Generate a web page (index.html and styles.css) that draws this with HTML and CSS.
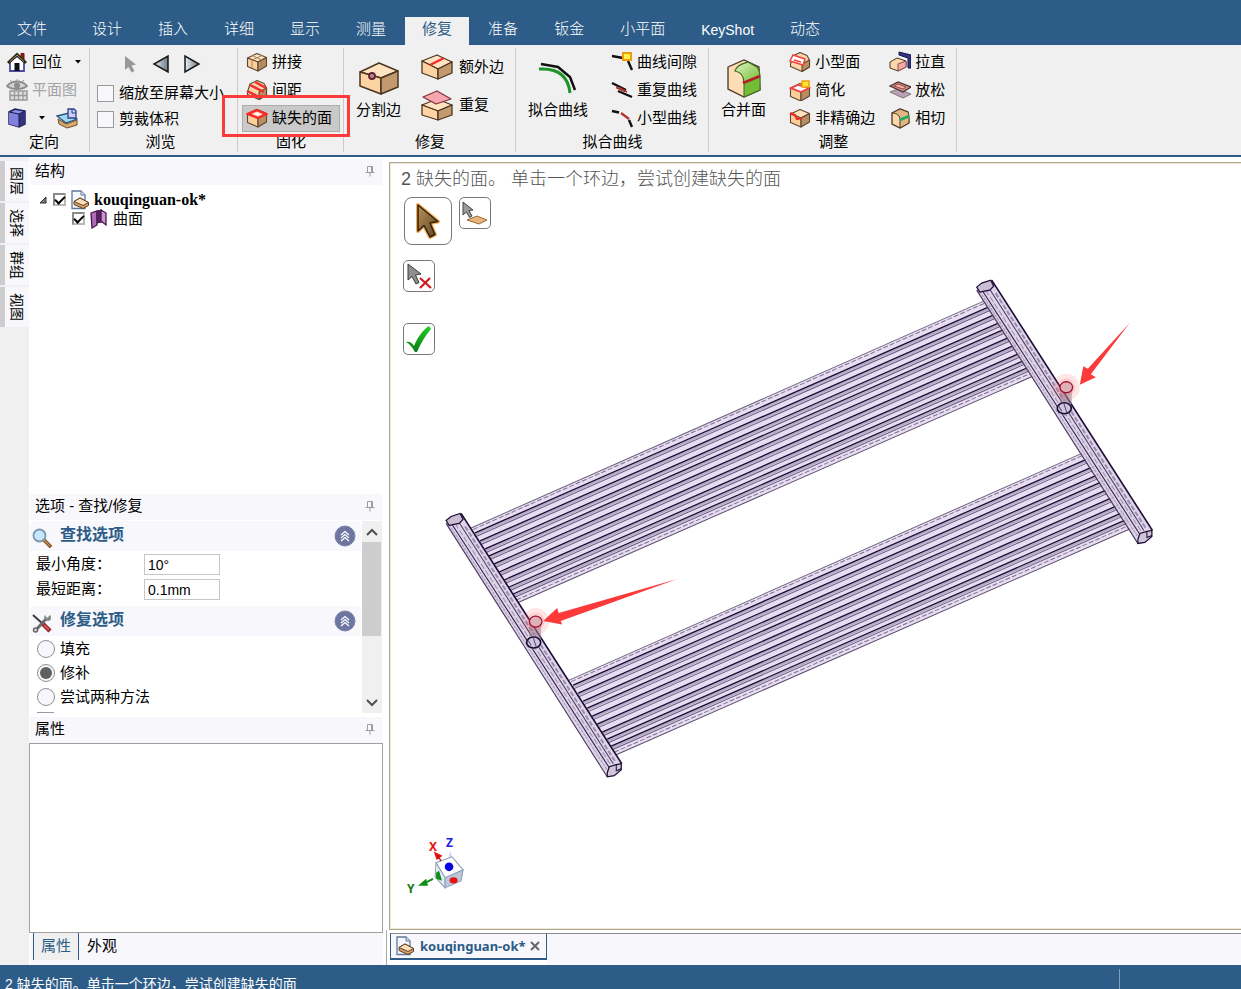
FILE: index.html
```html
<!DOCTYPE html>
<html lang="zh-CN">
<head>
<meta charset="utf-8">
<title>kouqinguan-ok*</title>
<link rel="stylesheet" href="styles.css">
</head>
<body>
<svg class="defs" aria-hidden="true">
  <defs>
    <linearGradient id="gArrow" x1="0" x2="1"><stop offset="0" stop-color="#e8eef2"/><stop offset="1" stop-color="#6e7a86"/></linearGradient>
    <linearGradient id="gGold" x1="0" y1="0" x2="1" y2="1"><stop offset="0" stop-color="#b8935a"/><stop offset="1" stop-color="#5f4520"/></linearGradient>
    <linearGradient id="gCheck" x1="0" y1="0" x2="0" y2="1"><stop offset="0" stop-color="#22d022"/><stop offset="1" stop-color="#0b7a18"/></linearGradient>
    <linearGradient id="gGreen" x1="0" y1="0" x2="1" y2="1"><stop offset="0" stop-color="#e2f3c8"/><stop offset="1" stop-color="#6dbb2c"/></linearGradient>
    <symbol id="box" viewBox="0 0 22 22">
      <g stroke="#5e4830" stroke-width="1.1" stroke-linejoin="round">
        <path d="M1.5 7 11 2.500 20.500 6.500 12 11Z" fill="#ffe3c0"/>
        <path d="M1.500 7 12 11V20L1.500 15.500Z" fill="#fbcf9c"/>
        <path d="M12 11 20.500 6.500V15L12 20Z" fill="#b98d60"/>
      </g>
    </symbol>
    <symbol id="roundbox" viewBox="0 0 22 22">
      <g stroke="#5e4830" stroke-width="1.100" stroke-linejoin="round">
        <path d="M1.500 13 4 5 11 1.500 18 4.500 20.500 9V16L13 20.500 1.500 15.500Z" fill="#fbd7ac"/>
        <path d="M13 13 20.500 9V16L13 20.500Z" fill="#b98d60"/>
      </g>
    </symbol>
    <symbol id="doc" viewBox="0 0 20 20">
      <path d="M2 1H11L15 5V18.500H2Z" fill="#f4f8fc" stroke="#61789c" stroke-width="1.300"/>
      <path d="M11 1V5H15" fill="#d5e0ee" stroke="#61789c"/>
      <path d="M4 11.500 10 8 18.500 12.500V15.500L13 18.500 4 14.500Z" fill="#d8a06a" stroke="#5e4020" stroke-linejoin="round"/>
      <path d="M4 11.500 10 8 18.500 12.500 13 15.500Z" fill="#fde0bb" stroke="#5e4020" stroke-linejoin="round"/>
    </symbol>
    <symbol id="pin" viewBox="0 0 10 12">
      <path d="M2.500 1.500H7.500V7.500M2.500 1.500V7.500M.5 7.500H9.500M5 7.500V11.500M6.500 1.500V7.500" fill="none" stroke="#9b9ba0"/>
    </symbol>
    <symbol id="collapse" viewBox="0 0 22 22">
      <circle cx="11" cy="11" r="10" fill="#6d76a0" stroke="#7e86a8"/>
      <path d="M7 10 11 6.500 15 10M7 13 11 9.500 15 13M7 16 11 12.500 15 16" fill="none" stroke="#fff" stroke-width="1.300"/>
    </symbol>
    <symbol id="caret" viewBox="0 0 8 4"><path d="M1 0H7L4 3.500Z"/></symbol>

    <g id="groove">
      <path d="M475 534.300 991 307.300" stroke="#b5abc3" stroke-width="2"/>
      <path d="M475 532.500 991 305.500" stroke="#1d0936" stroke-width="1.300"/>
      <path d="M476 536 992 309" stroke="#6a5784" stroke-width="1"/>
    </g>
    <g id="tubes" fill="none">
      <path d="M471 527.500 983 301 1032 376 518 602Z" fill="#e7def2"/>
      <path d="M471 527.500 983 301" stroke="#6f627f"/>
      <path d="M473 529 984 303" stroke="#7f718f" stroke-dasharray="5 2"/>
      <use href="#groove"/>
      <use href="#groove" x="5" y="8"/>
      <use href="#groove" x="10" y="16"/>
      <use href="#groove" x="14" y="23"/>
      <use href="#groove" x="19" y="31"/>
      <use href="#groove" x="24" y="39"/>
      <use href="#groove" x="29" y="47"/>
      <use href="#groove" x="34" y="54"/>
      <use href="#groove" x="38" y="61"/>
      <path d="M516 599.500 1030 373" stroke="#7f718f" stroke-dasharray="5 2"/>
      <path d="M518 602 1032 376" stroke="#5d4c70"/>
    </g>
    <g id="manifold" fill="none">
      <path d="M446 523 450 517 461 513 621.500 763 620 769 608 776Z" fill="#dacfe6" fill-opacity=".9"/>
      <path d="M446 523 607 776" stroke="#4c3a60" stroke-width="1.200"/>
      <path d="M449 524 608 771" stroke="#a396b4" stroke-dasharray="3 1"/>
      <path d="M452 524 609 767" stroke="#2a1542"/>
      <path d="M455 523 611 765" stroke="#9a8cac" stroke-dasharray="6 2"/>
      <path d="M459 522 613 763" stroke="#4a3560"/>
      <path d="M465 526 615 761" stroke="#9a8cac" stroke-width="2" stroke-dasharray="5 2"/>
      <path d="M461 513 621.500 763" stroke="#1d0936" stroke-width="1.600"/>
      <path d="M446 520 451 516 460 513 463 519 459 523 449 525Z" fill="#c9bed2" stroke="#1d0936" stroke-width="1.200"/>
      <path d="M607 772 609 766 616 764 621 763 621 769 614 775 607 776Z" fill="#cfc5d8" stroke="#1d0936" stroke-width="1.200"/>
      <path d="M616 764V770L621 768" stroke="#1d0936"/>
    </g>
    <g id="port">
      <circle cx="535.500" cy="621" r="13.500" fill="#fc3a3a" fill-opacity=".13"/>
      <path d="M529 621H541V638L535 636 529 639Z" fill="#9b7f93" fill-opacity=".55"/>
      <circle cx="535.500" cy="621" r="9" fill="#fc6a6a" fill-opacity=".18"/>
      <ellipse cx="535.500" cy="621" rx="6.300" ry="5.500" fill="#dfb1ba" stroke="#a3102e" stroke-width="1.300"/>
      <path d="M527 639 533 634 540 637 541 645 534 650 528 646Z" fill="#b5a9c0" fill-opacity=".7"/>
      <ellipse cx="533.500" cy="642" rx="7" ry="5.500" fill="#cfc5de" stroke="#170a30" stroke-width="1.600"/>
      <path d="M533 637 536 646M528 640 531 645" stroke="#5a4872"/>
    </g>
  </defs>
</svg>

<div class="app">
  <nav class="tabs" aria-label="功能区">
    <button class="tab tab-file">文件</button>
    <button class="tab">设计</button>
    <button class="tab">插入</button>
    <button class="tab">详细</button>
    <button class="tab">显示</button>
    <button class="tab">测量</button>
    <button class="tab active">修复</button>
    <button class="tab">准备</button>
    <button class="tab">钣金</button>
    <button class="tab">小平面</button>
    <button class="tab latin">KeyShot</button>
    <button class="tab">动态</button>
  </nav>

  <div class="ribbon">
    <section class="group orient">
      <div class="group-body stack">
        <div class="tool-row">
          <button class="tool"><svg class="icon" viewBox="0 0 22 22"><path d="M4 11V20H18V11L11 5Z" fill="#fff" stroke="#4a4aa0" stroke-width="1.800"/><path d="M15 2.500H18V10L15 7Z" fill="#9c1c1c" stroke="#6c1010"/><path d="M2 12 11 3.500 20 12" fill="none" stroke="#2e2a10" stroke-width="3"/><path d="M4 10.500 11 4 18 10.500" fill="none" stroke="#98904a" stroke-width="1"/><path d="M8.500 12H13.500V20H8.500Z" fill="#101018"/></svg>回位</button>
          <button class="drop drop-gap" aria-label="回位选项"><svg class="caret"><use href="#caret"/></svg></button>
        </div>
        <button class="tool" disabled><svg class="icon" viewBox="0 0 22 22"><path d="M1 7C6 1 16 1 21 7 16 11 6 11 1 7Z" fill="#d4d4d4" stroke="#8d8d8d" stroke-width="1.800"/><circle cx="11" cy="6.500" r="3" fill="#8d8d8d"/><path d="M4 1 6 3M11 0V2M18 1 16 3" stroke="#999"/><path d="M4 12H21V21H4Z" fill="#dedede" stroke="#999" stroke-width="1.500"/><path d="M4 16.500H21M8.500 12V21M12.500 12V21M17 12V21" stroke="#999" stroke-width="1.300"/></svg>平面图</button>
        <div class="tool-row">
          <button class="tool" aria-label="视图方向"><svg class="icon" viewBox="0 0 22 22"><path d="M3 5 9 2 19 4V17L13 20 3 17Z" fill="#8c8ce8" stroke="#1c1c50" stroke-width="1.500"/><path d="M3 5 13 7V20L3 17Z" fill="#8080dc"/><path d="M13 7 19 4V17L13 20Z" fill="#33337e"/><path d="M3 5 13 7 19 4M13 7V20" fill="none" stroke="#1c1c50"/></svg></button>
          <button class="drop" aria-label="视图方向选项"><svg class="caret"><use href="#caret"/></svg></button>
          <button class="tool" aria-label="草图平面"><svg class="icon" viewBox="0 0 22 22"><path d="M2 12 10 17 21 13V18L11 21 3 17Z" fill="#d8a86c" stroke="#6a5030"/><path d="M1 9 13 6 21 12 10 16Z" fill="#a0d8f0" stroke="#2c5478" stroke-width="1.300"/><path d="M12 11V2H18L20 4V11Z" fill="#c4d0f4" stroke="#30408c" stroke-width="1.300"/><path d="M16 2V6H20" fill="none" stroke="#30408c"/></svg></button>
        </div>
      </div>
      <h2 class="group-title">定向</h2>
    </section>

    <section class="group browse">
      <div class="group-body stack">
        <div class="nav-row">
          <button class="nav" aria-label="选择"><svg class="nav-icon" viewBox="0 0 20 20"><path d="M5 2V16L8.500 13 11.500 18.500 14.500 17 11.500 11.500 16 10.500Z" fill="#999"/></svg></button>
          <button class="nav" aria-label="上一视图"><svg class="nav-icon" viewBox="0 0 20 20"><path d="M17 2V18L3 10Z" fill="url(#gArrow)" stroke="#151515" stroke-width="1.500"/></svg></button>
          <button class="nav" aria-label="下一视图"><svg class="nav-icon" viewBox="0 0 20 20"><path d="M3 2V18L17 10Z" fill="url(#gArrow)" stroke="#151515" stroke-width="1.500"/></svg></button>
        </div>
        <label class="check-row"><input class="box-check" type="checkbox">缩放至屏幕大小</label>
        <label class="check-row"><input class="box-check" type="checkbox">剪裁体积</label>
      </div>
      <h2 class="group-title">浏览</h2>
    </section>

    <section class="group solidify">
      <div class="group-body stack">
        <button class="tool"><svg class="icon" viewBox="0 0 22 22"><use href="#box"/><path d="M6 4.500 16 9M16 4.500 6 9M6 9V17M16 9V17" fill="none" stroke="#a88460"/></svg>拼接</button>
        <button class="tool"><svg class="icon" viewBox="0 0 22 22"><use href="#roundbox"/><path d="M4 6 18 13M9 3 20 9M1 12 13 18" stroke="#f03030" stroke-width="2.500"/></svg>间距</button>
        <button class="tool pressed"><svg class="icon" viewBox="0 0 22 22"><use href="#box"/><path d="M2 7 11 3 20 7 12 11Z" fill="#ffd8b8" stroke="#f52a2a" stroke-width="2.500"/><path d="M8 7 11 5.500 14.500 7 12 8.500Z" fill="#fff"/></svg>缺失的面<span class="callout"></span></button>
      </div>
      <h2 class="group-title">固化</h2>
    </section>

    <section class="group fix">
      <div class="group-body">
        <button class="big"><svg class="big-icon" viewBox="0 0 40 40"><g stroke="#4a3520" stroke-width="1.500" stroke-linejoin="round"><path d="M1 14 20 5 39 13 22 20Z" fill="#ffe3c0"/><path d="M1 14 22 20V36L1 28Z" fill="#fdd3a4"/><path d="M22 20 39 13V29L22 36Z" fill="#c29a6e"/></g><circle cx="13" cy="18" r="3" fill="#b88" stroke="#5e2230" stroke-width="1.800"/></svg>分割边</button>
        <div class="stack tall">
          <button class="tool wide"><svg class="icon-lg" viewBox="0 0 32 32"><g stroke="#4a3520" stroke-width="1.300" stroke-linejoin="round"><path d="M1 10 16 4 31 11 17 18Z" fill="#ffe3c0"/><path d="M1 10 17 18V28L1 22Z" fill="#fdd3a4"/><path d="M17 18 31 11V22L17 28Z" fill="#c29a6e"/></g><path d="M9 14 23 7" stroke="#f52a2a" stroke-width="2.500"/></svg>额外边</button>
          <button class="tool wide"><svg class="icon-lg" viewBox="0 0 32 32"><g stroke="#4a3520" stroke-width="1.300" stroke-linejoin="round"><path d="M1 16 16 10 31 16 17 22Z" fill="#ffe3c0"/><path d="M1 16 17 22V31L1 26Z" fill="#fdd3a4"/><path d="M17 22 31 16V26L17 31Z" fill="#c29a6e"/><path d="M2 8 16 2 30 10 15 15Z" fill="#f8a6ae" stroke="#7c3440"/></g></svg>重复</button>
        </div>
      </div>
      <h2 class="group-title">修复</h2>
    </section>

    <section class="group fit">
      <div class="group-body">
        <button class="big"><svg class="big-icon" viewBox="0 0 40 40"><path d="M3 6 20 9 32 19 37 32" fill="none" stroke="#111" stroke-width="2.500"/><path d="M1 11C17 10 30 15 32 35" fill="none" stroke="#1c9428" stroke-width="3"/></svg>拟合曲线</button>
        <div class="stack">
          <button class="tool"><svg class="icon" viewBox="0 0 22 22"><path d="M1 5 12 7M17 10 21 19" stroke="#111" stroke-width="2.400"/><path d="M12 2H20V9H12Z" fill="#fff04a" stroke="#f09a10" stroke-width="2"/></svg>曲线间隙</button>
          <button class="tool"><svg class="icon" viewBox="0 0 22 22"><path d="M1 4 15 11M7 12 21 18" stroke="#111" stroke-width="2.400"/><path d="M5 8.500 14 12.500M8 8.500 16 13" stroke="#b03030" stroke-width="1.500"/></svg>重复曲线</button>
          <button class="tool"><svg class="icon" viewBox="0 0 22 22"><path d="M1 4 8 5.500M18 13 21 20" stroke="#111" stroke-width="2.400"/><path d="M10 6 18 12" stroke="#b03030" stroke-width="2.200"/></svg>小型曲线</button>
        </div>
      </div>
      <h2 class="group-title">拟合曲线</h2>
    </section>

    <section class="group adjust">
      <div class="group-body">
        <button class="big"><svg class="big-icon" viewBox="0 0 40 40"><path d="M4 9 20 2 35 9 36 32 20 39 4 31Z" fill="#fddcb6" stroke="#4a3520" stroke-width="1.300"/><path d="M11 13C13 6 22 5 24 4L33 9C36 13 36 17 36 19L20 25C20 18 17 14 11 13Z" fill="url(#gGreen)" stroke="#3d6a22" stroke-width="1.200"/><path d="M20 25 36 19V32L20 39Z" fill="#72bd35" stroke="#3d6a22"/><path d="M19 25 36 18" stroke="#b81c2c" stroke-width="2.500"/></svg>合并面</button>
        <div class="stack">
          <button class="tool"><svg class="icon" viewBox="0 0 22 22"><use href="#roundbox"/><path d="M1 10 4 4 16 8 14 14Z" fill="#fff" stroke="#f04040" stroke-width="1.500"/><path d="M5 9 12 11" stroke="#f04040" stroke-width="1.500"/></svg>小型面</button>
          <button class="tool"><svg class="icon" viewBox="0 0 22 22"><use href="#box" y="2"/><path d="M2 9 9 6 20 9 12 13Z" fill="#fff" stroke="#f04040" stroke-width="1.800"/><path d="M13 2H20V8H13Z" fill="#ffe72a" stroke="#f0a018" stroke-width="1.500"/></svg>简化</button>
          <button class="tool"><svg class="icon" viewBox="0 0 22 22"><use href="#box"/><path d="M1 6 6 8 8 12 13 11" fill="none" stroke="#f02828" stroke-width="2.200"/></svg>非精确边</button>
        </div>
        <div class="stack second">
          <button class="tool"><svg class="icon" viewBox="0 0 22 22"><path d="M10 1 22 4V17H19V7L10 4Z" fill="#34348a" stroke="#15154c"/><path d="M1 11 8 7 17 10V16L9 20 1 17Z" fill="#fbd7ac" stroke="#4a3520"/><path d="M9 13 17 10V16L9 20Z" fill="#f7a9a9" stroke="#854"/></svg>拉直</button>
          <button class="tool"><svg class="icon" viewBox="0 0 22 22"><path d="M1 13 9 10 22 15 14 19Z" fill="#b9a2b4" stroke="#84707e"/><path d="M1 7 9 3 22 8 14 13Z" fill="#c78d86" stroke="#4b3438" stroke-width="1.300"/><path d="M5 7 9 5 17 8 14 10Z" fill="#e6b8a4" stroke="#a84848"/></svg>放松</button>
          <button class="tool"><svg class="icon" viewBox="0 0 22 22"><path d="M3 6 11 2 19 5 20 16 11 21 3 17Z" fill="#fbd7ac" stroke="#4a3520" stroke-width="1.300"/><path d="M3 6C8 6 11 9 11 12V21L20 16V10C20 7 19 5 19 5L11 2Z" fill="#e1b682" stroke="#4a3520"/><path d="M11 13 20 9" stroke="#18b060" stroke-width="2.500"/></svg>相切</button>
        </div>
      </div>
      <h2 class="group-title">调整</h2>
    </section>
  </div>

  <main class="work">
    <aside class="side-tabs">
      <button class="side-tab">图层</button>
      <button class="side-tab">选择</button>
      <button class="side-tab">群组</button>
      <button class="side-tab">视图</button>
    </aside>

    <div class="panels">
      <header class="panel-head"><h2>结构</h2><svg class="pin"><use href="#pin"/></svg></header>
      <div class="tree">
        <div class="node"><svg class="twisty" viewBox="0 0 8 8"><path d="M7 1V7H1Z" fill="#777" stroke="#333"/></svg><input class="tree-check" type="checkbox" id="n1" checked><svg class="tree-icon"><use href="#doc"/></svg><label class="root-name" for="n1">kouqinguan-ok*</label></div>
        <div class="node child"><input class="tree-check" type="checkbox" id="n2" checked><svg class="tree-icon" viewBox="0 0 20 20"><path d="M2 4 8 2V16L3 19Z" fill="#b26ab4" stroke="#43184c" stroke-width="1.300"/><path d="M8 2 13 1V13L8 14Z" fill="#5c1f66" stroke="#43184c"/><path d="M12 1 17 4V16L12 12Z" fill="#cf94d2" stroke="#43184c" stroke-width="1.300"/></svg><label for="n2">曲面</label></div>
      </div>

      <header class="panel-head"><h2>选项 - 查找/修复</h2><svg class="pin"><use href="#pin"/></svg></header>
      <div class="options">
        <div class="option-list">
          <div class="section-head"><svg class="section-icon" viewBox="0 0 20 20"><path d="M12 12 19 19" stroke="#7b4c22" stroke-width="3.500"/><path d="M12 12 18 18" stroke="#c58c4c" stroke-width="1.500"/><circle cx="7.500" cy="7.500" r="6" fill="#c5e8fa" stroke="#7d98ae" stroke-width="1.800"/></svg><h3>查找选项</h3><button class="fold" aria-label="折叠查找选项"><svg class="fold-icon"><use href="#collapse"/></svg></button></div>
          <div class="fields">
            <label for="angle">最小角度：</label><input class="field" id="angle" value="10°">
            <label for="dist">最短距离：</label><input class="field" id="dist" value="0.1mm">
          </div>
          <div class="section-head"><svg class="section-icon" viewBox="0 0 20 20"><path d="M1 2 11 11" stroke="#3d3d3d" stroke-width="2"/><path d="M11 11 18 18" stroke="#8e2020" stroke-width="4.500"/><path d="M12 12 17 17" stroke="#d85858" stroke-width="2"/><path d="M3 18 14 6" stroke="#6a6a6a" stroke-width="3"/><path d="M18 2 15 5 13 2C11 5 13 8 16 8 19 8 20 5 18 2Z" fill="#888"/><circle cx="3.500" cy="17" r="2" fill="#ddd" stroke="#666" stroke-width="1.500"/></svg><h3>修复选项</h3><button class="fold" aria-label="折叠修复选项"><svg class="fold-icon"><use href="#collapse"/></svg></button></div>
          <div class="radios">
            <label class="radio-row"><input class="radio" type="radio" name="m">填充</label>
            <label class="radio-row"><input class="radio" type="radio" name="m" checked>修补</label>
            <label class="radio-row"><input class="radio" type="radio" name="m">尝试两种方法</label>
            <input class="box-check" type="checkbox" aria-label="更多选项">
          </div>
        </div>
        <div class="scrollbar">
          <button class="scroll-btn" aria-label="向上"><svg class="chev" viewBox="0 0 12 8"><path d="M1 7 6 2 11 7" fill="none" stroke="#505050" stroke-width="2"/></svg></button>
          <div class="thumb"></div>
          <button class="scroll-btn scroll-down" aria-label="向下"><svg class="chev" viewBox="0 0 12 8"><path d="M1 1 6 6 11 1" fill="none" stroke="#505050" stroke-width="2"/></svg></button>
        </div>
      </div>

      <header class="panel-head"><h2>属性</h2><svg class="pin"><use href="#pin"/></svg></header>
      <div class="props"></div>
      <div class="bottom-tabs"><button class="bottom-tab current">属性</button><button class="bottom-tab">外观</button></div>
    </div>

    <div class="stage">
      <div class="viewport">
        <svg class="model" viewBox="391 164 850 765" preserveAspectRatio="xMinYMin meet">
          <use href="#tubes"/>
          <use href="#tubes" x="98" y="152"/>
          <use href="#manifold"/>
          <use href="#manifold" x="530" y="-233"/>
          <use href="#port"/>
          <use href="#port" x="530" y="-234"/>
          <path d="M543 620.500 557 607.500 558.500 612.500 677 578.500 560.500 620.500 562 624Z" fill="#fc3a3a"/>
          <path d="M1079 384.500 1082.500 366 1087 368.500 1129 322.500 1090 374 1095 377Z" fill="#fc3a3a"/>
          <g class="axis">
            <path d="M450 850 454 862H447Z" fill="#d5d5fa"/>
            <path d="M436 862 452 856 463 869 445 877Z" fill="#fff" stroke="#8c9cb4"/>
            <path d="M436 862 445 877V887L435 876Z" fill="#e9eef6" stroke="#8c9cb4"/>
            <path d="M445 877 463 869 461 880 445 887Z" fill="#bcc8da" stroke="#8c9cb4"/>
            <circle cx="449" cy="866" r="4.300" fill="#0505e6"/>
            <ellipse cx="453.500" cy="879.500" rx="4" ry="3.200" fill="#e81212"/>
            <path d="M436 872 439 870 442 880 436 878Z" fill="#109018"/>
            <path d="M418 885 426 878 428 885Z" fill="#109018"/><path d="M424 882.500 433 878" stroke="#109018" stroke-width="2"/>
            <path d="M435 852 441 855 437 858ZM437 854 441 860" fill="#e01010" stroke="#e01010" stroke-width="1.500"/>
            <text x="429" y="850" fill="#e81212">X</text>
            <text x="446" y="846" fill="#2222e6">Z</text>
            <text x="407" y="892" fill="#187818">Y</text>
          </g>
        </svg>
        <div class="hud">
          <p class="hint">2 缺失的面。 单击一个环边，尝试创建缺失的面</p>
          <div class="hud-row">
            <button class="hud-btn hud-large" aria-label="选择"><svg class="hud-ptr" viewBox="0 0 24 36"><g stroke-linejoin="round"><path d="M2 2V28L8 22.500 14 34 19 31.500 14 20 22 18.500Z" fill="none" stroke="#f8ae58" stroke-width="4"/><path d="M2 2V28L8 22.500 14 34 19 31.500 14 20 22 18.500Z" fill="url(#gGold)" stroke="#2c200e" stroke-width="1.500"/></g></svg></button>
            <button class="hud-btn" aria-label="选择面"><svg class="hud-icon" viewBox="0 0 30 30"><path d="M3 4V17L6.500 14 9.500 19.500 12 18 9 12.500 13 12Z" fill="#9a9a9a" stroke="#444"/><path d="M7 22 17 18 27 22 19 26Z" fill="#e6b47c" stroke="#9a6a38"/></svg></button>
          </div>
          <button class="hud-btn" aria-label="排除"><svg class="hud-icon" viewBox="0 0 30 30"><path d="M4 3V19L8 15.500 12 23 15 21.500 11.500 14 17 13Z" fill="#8f8f8f" stroke="#3c3c3c"/><path d="M16 17 27 27M26 17 16 27" stroke="#cf1820" stroke-width="2.200"/></svg></button>
          <button class="hud-btn" aria-label="完成"><svg class="hud-icon" viewBox="0 0 30 30"><path d="M2 18C6 17 8 19 10 22 14 12 20 5 25 2L27 5C21 12 17 19 13 28H11C8 23 6 20 2 18Z" fill="url(#gCheck)"/></svg></button>
        </div>
      </div>
      <div class="doc-tabs">
        <div class="doc-tab"><svg class="tree-icon"><use href="#doc"/></svg><span>kouqinguan-ok*</span><button class="close" aria-label="关闭"><svg class="close-icon" viewBox="0 0 10 10"><path d="M1 1 9 9M9 1 1 9" stroke="#666" stroke-width="2"/></svg></button></div>
        <div class="doc-rest"></div>
      </div>
    </div>
  </main>

  <footer class="status"><span>2 缺失的面。单击一个环边，尝试创建缺失的面</span><i class="status-sep"></i></footer>
</div>
</body>
</html>
```
FILE: styles.css
```css
* { box-sizing: border-box; }
body {
  margin: 0;
  overflow: hidden;
  font: 15px/20px "Liberation Sans", "Noto Sans CJK SC", sans-serif;
  color: #000;
}
button, input { font: inherit; color: inherit; margin: 0; }
button { padding: 0; border: 0; background: none; white-space: nowrap; }
h2, h3, p { margin: 0; font: inherit; }
svg { display: block; flex: none; }
.defs { position: absolute; width: 0; height: 0; }

.app { display: flex; flex-direction: column; height: 100vh; background: #fff; }

/* top tabs */
.tabs { display: flex; align-items: flex-end; gap: 2px; height: 45px; flex: none; background: #2c5c87; }
.tab { height: 28px; padding: 0 17px 4px; color: #fff; font-weight: 300; }
.tab-file { margin-right: 9px; }
.tab.active { background: #f0f0f0; color: #2c5c87; font-weight: 400; }
.tab.latin { font-size: 14px; padding-bottom: 2px; }

/* ribbon */
.ribbon { display: flex; flex: none; padding: 3px 0; background: #f0f0f0; border-bottom: 2px solid #2c5c87; }
.group { display: flex; flex-direction: column; border-right: 1px solid #cbcbcb; padding-right: 7px; }
.group-body { display: flex; height: 84px; }
.group-title { text-align: center; height: 20px; line-height: 20px; }
.stack { display: flex; flex-direction: column; align-items: flex-start; justify-content: space-around; }
.tall { justify-content: flex-start; }
.tool-row { display: flex; }
.tool { display: flex; align-items: center; gap: 4px; height: 27px; padding: 0 3px; border: 1px solid transparent; }
.tool:disabled { color: #a3a3a3; }
.icon { width: 22px; height: 22px; }
.icon-lg { width: 32px; height: 32px; }
.tool.wide { gap: 6px; height: 38px; }
.drop { display: grid; place-items: center; width: 16px; }
.drop-gap { margin-left: 4px; }
.caret { width: 8px; height: 4px; }
.orient { padding-left: 2px; padding-right: 3px; }
.orient .tool-row:last-child { gap: 2px; }
.browse { padding-left: 7px; padding-right: 13px; }
.solidify { padding-left: 4px; padding-right: 3px; }
.solidify .stack { align-items: stretch; }
.fix, .fit, .adjust { padding-left: 8px; }
.fix .group-body { gap: 12px; }
.fit .group-body, .adjust .group-body { gap: 15px; }
.adjust .second { margin-left: -9px; }
.nav-row { display: flex; align-self: center; }
.nav { display: grid; place-items: center; width: 31px; height: 32px; }
.nav-icon { width: 20px; height: 20px; }
.check-row { display: flex; align-items: center; gap: 5px; height: 25px; white-space: nowrap; }
.box-check { appearance: none; width: 17px; height: 17px; background: #f7f7fc; border: 1px solid #9a9a9e; }
.tool.pressed { position: relative; background: #c9c9c9; border-color: #adadad; padding-right: 7px; }
.callout { position: absolute; inset: -11px -11px -6px -21px; border: 3px solid #fc3a3a; }
.big { display: flex; flex-direction: column; align-items: center; padding: 10px 4px 0; gap: 2px; }
.big-icon { width: 40px; height: 40px; }

/* work area */
.work { display: flex; flex: 1; min-height: 0; }
.side-tabs { display: flex; flex-direction: column; gap: 2px; width: 29px; flex: none; padding-top: 4px; background: #f0f0f0; }
.side-tab { width: 29px; height: 40px; border-left: 5px solid #cdcdcd; background: #f7f7fc; writing-mode: vertical-rl; text-orientation: sideways; font-size: 14px; line-height: 20px; }

.panels { display: flex; flex-direction: column; width: 353px; flex: none; padding-top: 2px; margin-left: 1px; }
.panel-head { display: flex; align-items: center; justify-content: space-between; height: 26px; flex: none; padding: 0 7px 3px 5px; background: #f7f7fc; margin-right: 1px; }
.pin { width: 10px; height: 12px; }
.tree { flex: 1; padding-top: 5px; }
.node { display: flex; align-items: center; height: 19px; padding-left: 9px; }
.node.child { padding-left: 42px; }
.twisty { width: 8px; height: 8px; margin-right: 6px; }
.tree-check { width: 13px; height: 13px; margin-right: 4px; appearance: none; background: #fff; border: 2px solid #8a8a8a; border-right-color: #b9b9b9; border-bottom-color: #b9b9b9; display: grid; place-items: center; }
.tree-check:checked::after { content: ""; width: 8px; height: 4px; border: solid #000; border-width: 0 0 2px 2px; transform: rotate(-45deg); margin-bottom: 2px; }
.tree-icon { width: 20px; height: 20px; }
.node label { margin-left: 4px; }
.root-name { font: bold 16px/19px "Liberation Serif", serif; }

.options { display: flex; height: 192px; flex: none; margin: 1px 1px 4px 0; }
.option-list { flex: 1; overflow: hidden; margin-right: 1px; }
.section-head { display: flex; align-items: center; height: 30px; padding: 0 5px 0 2px; background: #f7f7fc; border-radius: 5px 5px 0 0; }
.section-head h3 { flex: 1; margin-left: 8px; padding-bottom: 3px; font-weight: 700; font-size: 16px; color: #2c5c87; }
.section-icon { width: 20px; height: 20px; margin-top: 4px; }
.fold-icon { width: 22px; height: 22px; }
.fields { display: grid; grid-template-columns: 108px 76px; row-gap: 4px; padding: 3px 6px 6px; line-height: 20px; }
.field { width: 76px; height: 21px; padding: 0 3px; border: 1px solid #c6c6c9; background: #fff; font-size: 14px; }
.radios { display: flex; flex-direction: column; align-items: flex-start; padding: 1px 7px; }
.radio-row { display: flex; align-items: center; gap: 5px; height: 24px; }
.radio { appearance: none; width: 18px; height: 18px; border: 1px solid #8f8f93; border-radius: 50%; background: #f7f7fc; display: grid; place-items: center; }
.radio:checked::after { content: ""; width: 12px; height: 12px; border-radius: 50%; background: #606060; }
.radios .box-check { margin-top: 3px; }
.scrollbar { display: flex; flex-direction: column; width: 20px; background: #f0f0f0; }
.scroll-btn { display: grid; place-items: center; height: 21px; }
.scroll-down { margin-top: auto; }
.chev { width: 12px; height: 8px; }
.thumb { height: 94px; margin-right: 1px; background: #cdcdcd; }
.props { height: 190px; flex: none; border: 1px solid #a0a0a0; margin-left: -1px; }
.bottom-tabs { display: flex; align-items: flex-start; height: 32px; flex: none; background: #f7f7fc; padding-left: 3px; }
.bottom-tab { height: 27px; padding: 0 8px 2px; }
.bottom-tab.current { padding: 0 7px 2px; background: #f0f0f0; color: #2c5c87; border: solid #2c5c87; border-width: 0 1px; }

.stage { display: flex; flex-direction: column; flex: 1; min-width: 0; margin-left: 3px; padding-top: 5px; }
.viewport { position: relative; flex: 1; min-height: 0; margin-left: 3px; border: solid #aca899; border-width: 1px 0 1px 1px; box-shadow: inset 1px 1px #f0e8d0, inset 0 -1px #f0e8d0; }
.model { position: absolute; top: 1px; left: 1px; width: 100%; height: 100%; }
.axis { font: bold 12px "Noto Sans", sans-serif; }
.hud { position: relative; display: flex; flex-direction: column; align-items: flex-start; padding: 4px 13px; }
.hint { font-size: 18px; line-height: 24px; font-weight: 300; color: #555; margin: 0 -2px 6px; }
.hud-row { display: flex; gap: 7px; margin: 0 0 15px 1px; }
.hud-btn { display: grid; place-items: center; width: 32px; height: 32px; border: 1px solid #77777c; border-radius: 5px; background: #fff; }
.hud-btn + .hud-btn { margin-top: 31px; }
.hud-row .hud-btn { margin-top: 0; }
.hud-large { width: 48px; height: 48px; border-radius: 8px; }
.hud-icon { width: 30px; height: 30px; }
.hud-ptr { width: 24px; height: 36px; overflow: visible; }
.doc-tabs { display: flex; height: 35px; flex: none; padding-top: 3px; border-left: 1px solid #aaa; }
.doc-tab { display: flex; align-items: center; height: 27px; margin-left: 3px; padding: 0 6px 0 4px; border: solid #2c5c87; border-width: 1px 1px 2px 1px; border-top-color: #8b8b8b; background: #f7f7fc; color: #2c5c87; font: bold 13px/20px "Noto Sans", sans-serif; }
.doc-tab span { margin: 0 5px; }
.close-icon { width: 10px; height: 10px; }
.doc-rest { flex: 1; border-top: 1px solid #8b8b8b; background: #f7f7fc; }

.status { display: flex; height: 24px; flex: none; padding: 9px 0 0 5px; overflow: hidden; background: #2c5c87; color: #fff; font-size: 14px; }
.status-sep { margin: -5px 121px 0 auto; height: 20px; border-left: 1px solid #7f9db8; }
```
